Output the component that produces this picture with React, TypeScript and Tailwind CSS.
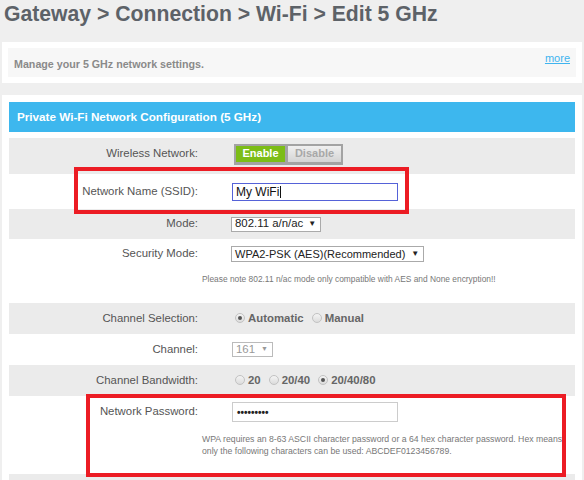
import React from "react";

function Radio({ checked }: { checked?: boolean }) {
  return (
    <span className="inline-flex items-center justify-center w-[10px] h-[10px] rounded-full border border-[#c2c2c2] bg-gradient-to-b from-[#f4f4f4] to-[#dcdcdc]">
      {checked ? <span className="w-[4px] h-[4px] rounded-full bg-[#555]" /> : null}
    </span>
  );
}

function Label({ children }: { children: React.ReactNode }) {
  return <div className="w-[189px] shrink-0 text-right text-[11.4px] text-[#555]">{children}</div>;
}

export default function App() {
  return (
    <div className="relative min-h-[480px] h-[480px] overflow-hidden bg-[#efefef] font-['Liberation_Sans',Arial,sans-serif]">
      <h1 className="h-[42px] pl-[4px] pt-[1px] text-[21.2px] leading-[26px] font-bold text-[#5d6268]">
        Gateway &gt; Connection &gt; Wi-Fi &gt; Edit 5 GHz
      </h1>

      <div className="mx-[2px] bg-white p-[6px]">
        <div className="flex h-[29px] items-start justify-between bg-[#f7f7f7] pl-[6px] pr-[6px]">
          <span className="mt-[8px] text-[10.7px] font-bold text-[#8a8a8a]">Manage your 5 GHz network settings.</span>
          <a className="mt-[2px] text-[11px] text-[#3fb4ef] underline">more</a>
        </div>
      </div>

      <div className="mx-[2px] mt-[12px] bg-white px-[7px] pt-[7px] pb-[20px]">
        <div className="flex h-[30px] items-center bg-[#3db7ee] pl-[8px] text-[11.7px] font-bold text-white">
          Private Wi-Fi Network Configuration (5 GHz)
        </div>

        <div className="mt-[6px]">
          {/* Wireless Network */}
          <div className="flex h-[36px] items-center bg-[#ebebeb] pb-[4px]">
            <Label>Wireless Network:</Label>
            <div className="ml-[36px] flex gap-[3px] bg-[#a3a3a3] p-[2px] pb-[3px]">
              <div className="flex h-[16px] w-[49px] items-center justify-center bg-[#7cbd16] text-[11px] font-bold text-white">
                Enable
              </div>
              <div className="flex h-[16px] w-[53px] items-center justify-center bg-gradient-to-b from-[#f0f0f0] to-[#d4d4d4] text-[11px] font-bold text-[#a8a8a8]">
                Disable
              </div>
            </div>
          </div>

          {/* SSID */}
          <div className="flex h-[35px] items-center bg-white">
            <Label>Network Name (SSID):</Label>
            <div className="ml-[34px] flex h-[18px] w-[166px] items-center border border-[#5562d8] pl-[3px] text-[12px] text-[#111]">
              My WiFi<span className="ml-[1px] inline-block h-[12px] w-px bg-[#111]" />
            </div>
          </div>

          {/* Mode */}
          <div className="flex h-[30px] items-center bg-[#ebebeb]">
            <Label>Mode:</Label>
            <div className="ml-[33px] flex h-[15px] items-center border border-[#aaa] bg-white pl-[3px] pr-[4px] text-[11.4px] text-[#222]">
              802.11 a/n/ac<span className="ml-[5px] text-[8px]">▼</span>
            </div>
          </div>

          {/* Security */}
          <div className="h-[64px] bg-white pt-[7px]">
            <div className="flex h-[16px] items-center">
              <Label>Security Mode:</Label>
              <div className="ml-[33px] flex h-[16px] items-center border border-[#aaa] bg-white pl-[3px] pr-[4px] text-[11px] text-[#222]">
                WPA2-PSK (AES)(Recommended)<span className="ml-[6px] text-[8px]">▼</span>
              </div>
            </div>
            <div className="mt-[12px] pl-[193px] text-[8.4px] leading-[10px] text-[#777]">
              Please note 802.11 n/ac mode only compatible with AES and None encryption!!
            </div>
          </div>

          {/* Channel Selection */}
          <div className="flex h-[31px] items-center bg-[#ebebeb]">
            <Label>Channel Selection:</Label>
            <div className="ml-[37px] flex items-center text-[11.4px] font-bold text-[#666]">
              <Radio checked />
              <span className="ml-[3px]">Automatic</span>
              <span className="ml-[8px]" />
              <Radio />
              <span className="ml-[3px]">Manual</span>
            </div>
          </div>

          {/* Channel */}
          <div className="flex h-[31px] items-center bg-white">
            <Label>Channel:</Label>
            <div className="ml-[34px] flex h-[15px] items-center border border-[#bbb] bg-white pl-[3px] pr-[4px] text-[11.4px] text-[#999]">
              161<span className="ml-[6px] text-[7px]">▼</span>
            </div>
          </div>

          {/* Channel Bandwidth */}
          <div className="flex h-[31px] items-center bg-[#ebebeb]">
            <Label>Channel Bandwidth:</Label>
            <div className="ml-[37px] flex items-center text-[11.4px] font-bold text-[#666]">
              <Radio />
              <span className="ml-[3px]">20</span>
              <span className="ml-[8px]" />
              <Radio />
              <span className="ml-[3px]">20/40</span>
              <span className="ml-[8px]" />
              <Radio checked />
              <span className="ml-[3px]">20/40/80</span>
            </div>
          </div>

          {/* Password */}
          <div className="h-[78px] bg-white pt-[6px]">
            <div className="flex h-[20px] items-center">
              <Label>Network Password:</Label>
              <div className="ml-[34px] flex h-[20px] w-[166px] items-center border border-[#ccc] pl-[4px] text-[10px] font-bold text-[#222]">
                •••••••••
              </div>
            </div>
            <div className="mt-[11px] pl-[193px] text-[8.7px] leading-[12px] text-[#777]">
              WPA requires an 8-63 ASCII character password or a 64 hex character password. Hex means
              <br />
              only the following characters can be used: ABCDEF0123456789.
            </div>
          </div>

          <div className="h-[30px] bg-[#ebebeb]" />
        </div>
      </div>

      <div className="absolute left-[74px] top-[167px] h-[47px] w-[335px] border-4 border-[#ec1c24]" />
      <div className="absolute left-[86px] top-[394px] h-[83px] w-[480px] border-4 border-[#ec1c24]" />
    </div>
  );
}
